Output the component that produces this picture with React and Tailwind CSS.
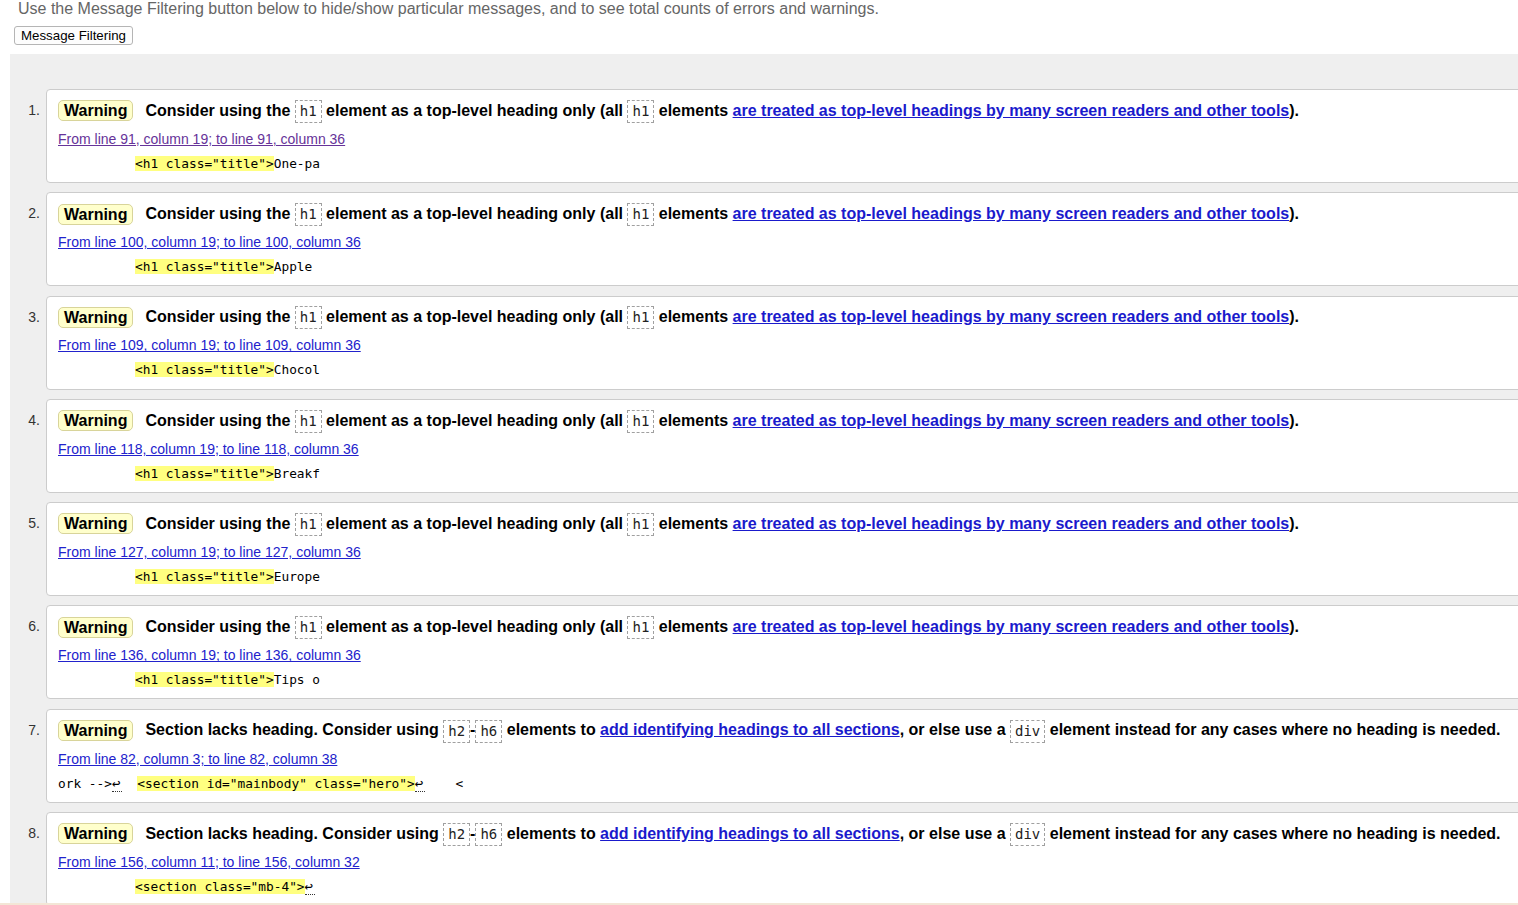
import React from "react";

const SANS = { fontFamily: '"Liberation Sans", Arial, sans-serif' };

function Code({ children }) {
  return (
    <code className="inline-block border border-dashed border-[#a0a0a0] px-[4px] leading-[21px] text-[14px] font-normal text-[#222] align-middle [font-family:'DejaVu_Sans_Mono',monospace]">
      {children}
    </code>
  );
}

function Ret() {
  return <span className="inline-block w-[10px] border-b border-dotted border-[#333] text-[14px] leading-[15px]">↩</span>;
}

function Hl({ children }) {
  return <span className="bg-[#ffff80]">{children}</span>;
}

function H1Message() {
  return (
    <>
      Consider using the <Code>h1</Code> element as a top-level heading only (all <Code>h1</Code> elements{" "}
      <a href="#" className="text-[#1a1acc] underline">are treated as top-level headings by many screen readers and other tools</a>).
    </>
  );
}

function SectionMessage() {
  return (
    <>
      Section lacks heading. Consider using <Code>h2</Code>-<Code>h6</Code> elements to{" "}
      <a href="#" className="text-[#1a1acc] underline">add identifying headings to all sections</a>, or else use a <Code>div</Code> element instead for any cases where no heading is needed.
    </>
  );
}

const h1Items = [
  { l: 91, rest: "One-pa" },
  { l: 100, rest: "Apple" },
  { l: 109, rest: "Chocol" },
  { l: 118, rest: "Breakf" },
  { l: 127, rest: "Europe" },
  { l: 136, rest: "Tips o" },
];

function Item({ n, msg, link, visited, code }) {
  return (
    <li className="flex">
      <div className="w-[36px] shrink-0 pr-[6px] pt-[9px] text-right text-[14px] leading-[24px] text-[#333]">{n}.</div>
      <div className="flex-1 -mr-[20px] h-[94px] border border-[#cccccc] rounded-tl-[4px] rounded-bl-[4px] bg-white pl-[11px] pt-[8px]">
        <div className="whitespace-nowrap text-[16px] font-bold leading-[24px] text-black">
          <span className="inline-block mr-[12px] rounded-[5px] border border-[#d8d49a] bg-[#ffffcc] px-[5px] leading-[19px] align-middle">Warning</span>
          <span className="align-middle">{msg}</span>
        </div>
        <div className="mt-[7px] text-[14px] leading-[18px]">
          <a href="#" className={visited ? "text-[#663399] underline" : "text-[#2222cc] underline"}>{link}</a>
        </div>
        <div className="mt-[7px] whitespace-pre text-[12.8px] leading-[18px] text-black [font-family:'DejaVu_Sans_Mono',monospace]">
          {code}
        </div>
      </div>
    </li>
  );
}

export default function App() {
  return (
    <div className="flex h-[905px] flex-col overflow-hidden bg-white" style={SANS}>
      <div className="flex-1 overflow-hidden">
        <p className="pl-[18px] text-[16px] leading-[18px] text-[#666]">
          Use the Message Filtering button below to hide/show particular messages, and to see total counts of errors and warnings.
        </p>
        <div className="flex pl-[14px] pt-[8px]">
          <button className="block h-[19px] rounded-[3px] border border-[#b5b5b5] bg-[#fdfdfd] px-[6px] text-[13.3px] leading-[17px] text-black">
            Message Filtering
          </button>
        </div>
        <div className="ml-[10px] mt-[9px] h-[900px] overflow-hidden bg-[#efefef] pt-[35px]">
          <ol className="flex flex-col gap-[9.3px]">
            {h1Items.map((it, i) => (
              <Item
                key={i}
                n={i + 1}
                visited={i === 0}
                msg={<H1Message />}
                link={`From line ${it.l}, column 19; to line ${it.l}, column 36`}
                code={
                  <>
                    {"          "}
                    <Hl>{'<h1 class="title">'}</Hl>
                    {it.rest}
                  </>
                }
              />
            ))}
            <Item
              n={7}
              msg={<SectionMessage />}
              link="From line 82, column 3; to line 82, column 38"
              code={
                <>
                  {"ork -->"}
                  <Ret />
                  {"  "}
                  <Hl>{'<section id="mainbody" class="hero">'}</Hl>
                  <Ret />
                  {"    <"}
                </>
              }
            />
            <Item
              n={8}
              msg={<SectionMessage />}
              link="From line 156, column 11; to line 156, column 32"
              code={
                <>
                  {"          "}
                  <Hl>{'<section class="mb-4">'}</Hl>
                  <Ret />
                </>
              }
            />
          </ol>
        </div>
      </div>
      <div className="h-[2px] shrink-0 bg-[#f3e6d6]" />
    </div>
  );
}
